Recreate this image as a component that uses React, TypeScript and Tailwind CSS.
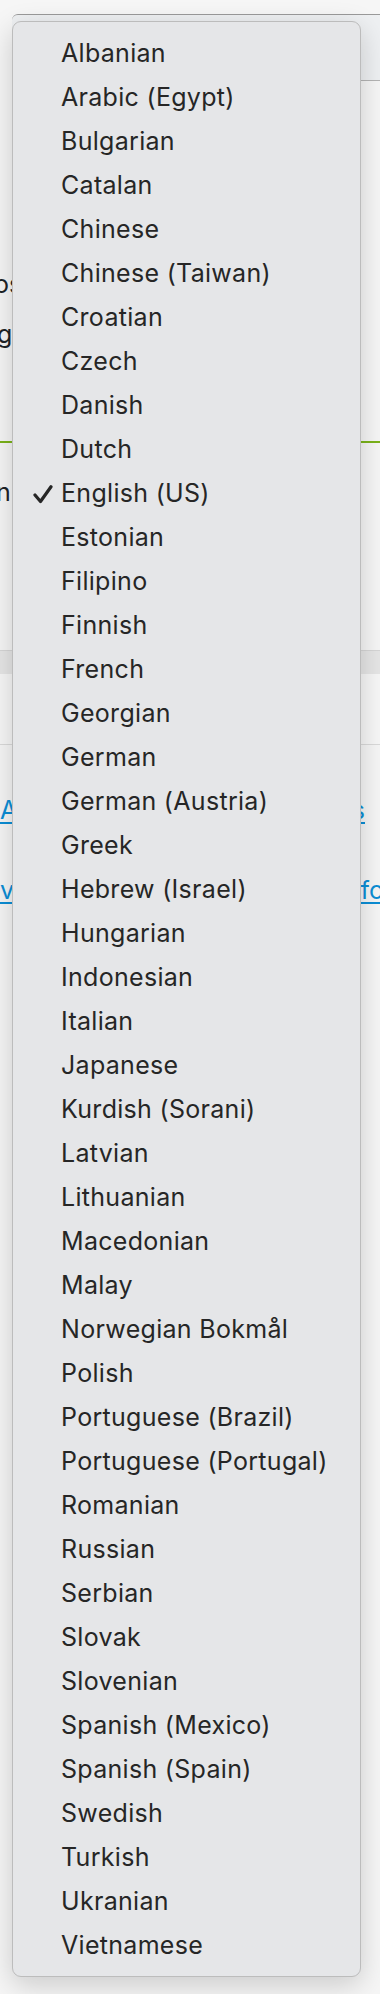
import React from "react";

const langs = [
  "Albanian",
  "Arabic (Egypt)",
  "Bulgarian",
  "Catalan",
  "Chinese",
  "Chinese (Taiwan)",
  "Croatian",
  "Czech",
  "Danish",
  "Dutch",
  "English (US)",
  "Estonian",
  "Filipino",
  "Finnish",
  "French",
  "Georgian",
  "German",
  "German (Austria)",
  "Greek",
  "Hebrew (Israel)",
  "Hungarian",
  "Indonesian",
  "Italian",
  "Japanese",
  "Kurdish (Sorani)",
  "Latvian",
  "Lithuanian",
  "Macedonian",
  "Malay",
  "Norwegian Bokmål",
  "Polish",
  "Portuguese (Brazil)",
  "Portuguese (Portugal)",
  "Romanian",
  "Russian",
  "Serbian",
  "Slovak",
  "Slovenian",
  "Spanish (Mexico)",
  "Spanish (Spain)",
  "Swedish",
  "Turkish",
  "Ukranian",
  "Vietnamese",
];

function Check() {
  return (
    <svg width="20" height="19" viewBox="0 0 20 19" className="shrink-0">
      <path
        d="M2 10 L7.5 16.5 L18 1.8"
        fill="none"
        stroke="#262626"
        strokeWidth="3.2"
        strokeLinecap="round"
        strokeLinejoin="round"
      />
    </svg>
  );
}

export default function App() {
  return (
    <div
      className="relative w-[380px] h-[1994px] overflow-hidden bg-[#f6f6f6] text-[#1d2327]"
      style={{ fontFamily: "Inter, 'Noto Sans', sans-serif" }}
    >
      {/* background page content */}
      <div className="flex flex-col">
        <div className="h-[14px]" />
        <div className="ml-[12px] h-[67px] border-t border-t-[#9a9a9a] border-b border-b-[#b4b4b4] bg-[#eef0f2] rounded-tl-[6px]" />
        <div className="h-[179px]" />
        <div className="h-[59px] text-[25px] leading-[48px] -ml-[6px]">os</div>
        <div className="h-[40px] text-[25px] leading-[30px] -ml-[3px]">g</div>
        <div className="h-[82px]" />
        <div className="h-[2px] bg-[#7bb31a]" />
        <div className="h-[34px]" />
        <div className="h-[30px] text-[25px] leading-[30px] -ml-[4px]">n</div>
        <div className="h-[143px]" />
        <div className="h-[24px] bg-[#e6e6e6] border-t border-[#d6d6d6]" />
        <div className="h-[70px] bg-[#f7f7f7]" />
        <div className="h-[1px] bg-[#dadada]" />
        <div className="h-[49px]" />
        <div className="flex h-[45px] items-start justify-between text-[25px] leading-[32px] text-[#0b8ed6]">
          <span className="underline underline-offset-[3px] decoration-2">A</span>
          <span className="mr-[15px] underline underline-offset-[3px] decoration-2">s</span>
        </div>
        <div className="h-[38px]" />
        <div className="flex h-[40px] items-start justify-between text-[25px] leading-[26px] text-[#0b8ed6]">
          <span className="underline underline-offset-[3px] decoration-2">v</span>
          <span className="-mr-[4px] underline underline-offset-[3px] decoration-2">fo</span>
        </div>
      </div>

      {/* popup menu */}
      <div className="absolute left-[12px] top-[21px] w-[349px] rounded-[9px] border border-[#bcbcbc] bg-[#e5e6e8] pt-[10px] pb-[8px] shadow-[0_8px_28px_rgba(0,0,0,0.18)]">
        {langs.map((l) => (
          <div
            key={l}
            className="flex h-[44px] items-center text-[25px] tracking-[0.3px] text-[#262626]"
          >
            <div className="flex w-[48px] shrink-0 justify-end pr-[8px]">
              {l === "English (US)" ? <Check /> : null}
            </div>
            <span className="whitespace-nowrap">{l}</span>
          </div>
        ))}
      </div>
    </div>
  );
}
